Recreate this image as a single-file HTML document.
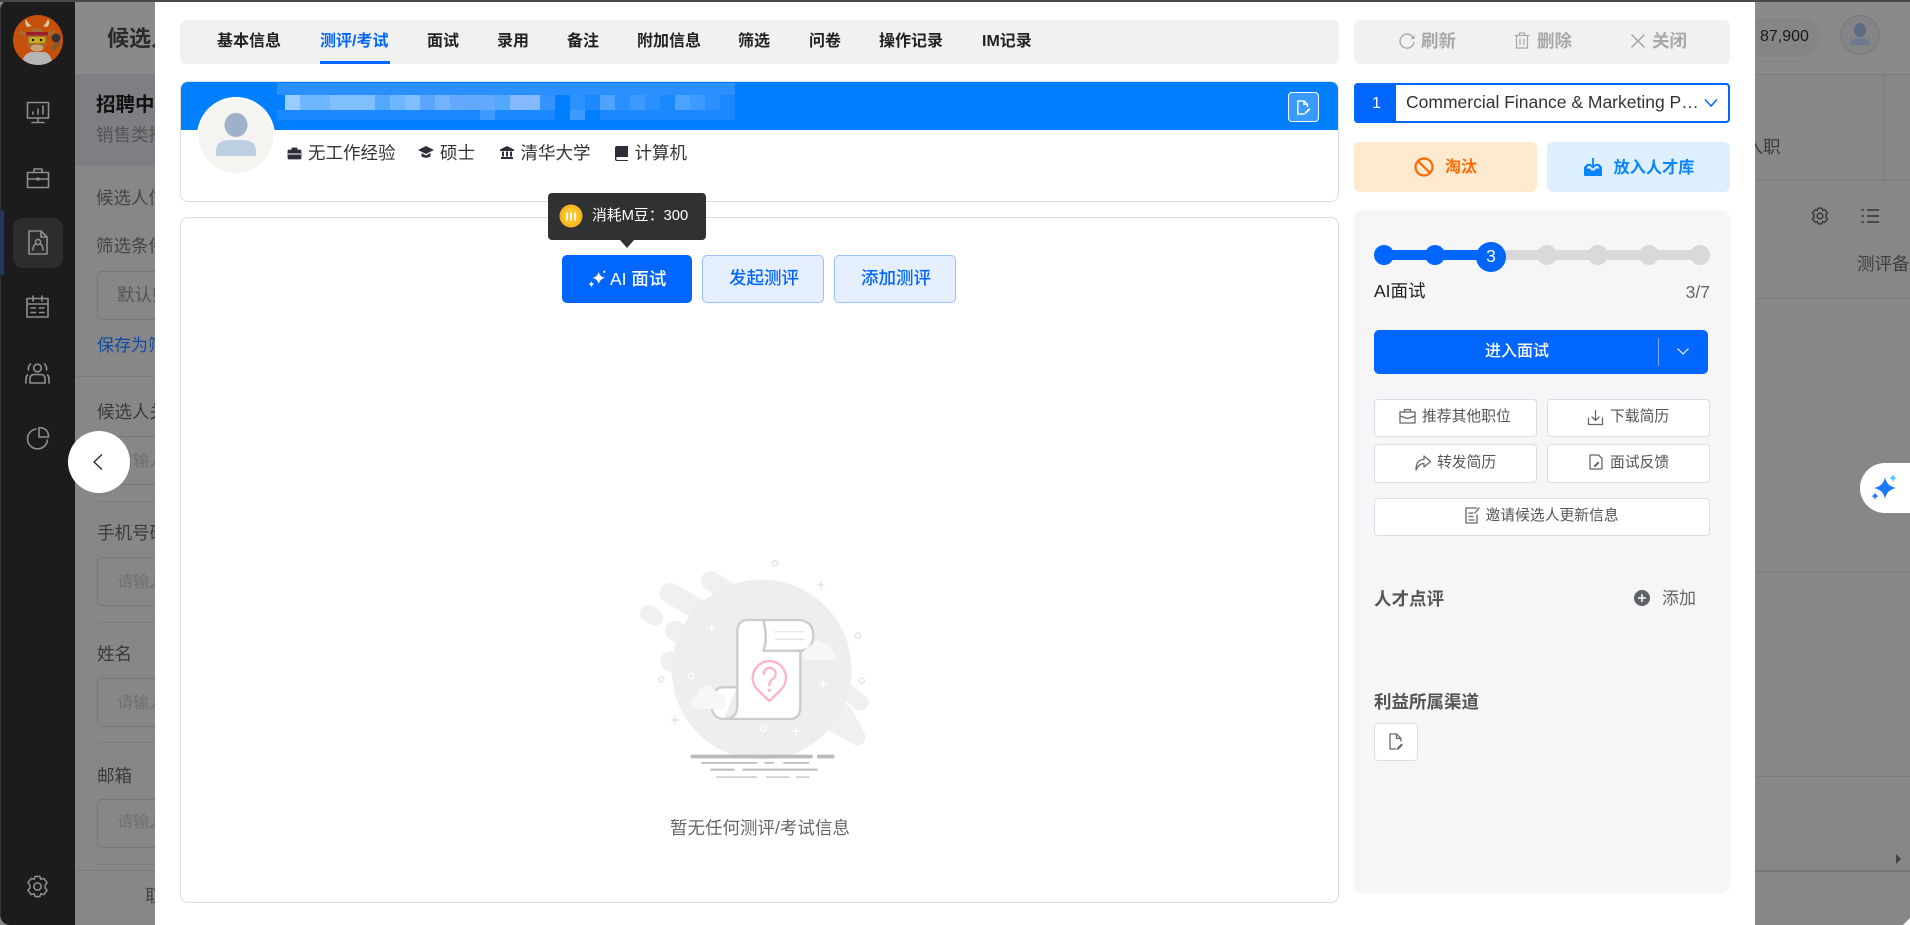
<!DOCTYPE html>
<html lang="zh">
<head>
<meta charset="utf-8">
<title>候选人</title>
<style>
html,body{margin:0;padding:0;width:1910px;height:925px;overflow:hidden;background:#878787}
body{position:relative;font-family:"Liberation Sans","Noto Sans CJK SC",sans-serif;color:#333}
.a{position:absolute}
.t{position:absolute;line-height:1;white-space:nowrap}
svg{position:absolute;display:block;overflow:visible}
.box{position:absolute;box-sizing:border-box}
.bg-in{position:absolute;left:97px;width:120px;height:49px;box-sizing:border-box;border:1px solid #777;border-radius:5px}
.hr{position:absolute;background:#7c7c7c;height:1px}
.tab{position:absolute;top:34px;font-size:16px;line-height:16px;font-weight:600;color:#222;white-space:nowrap}
.wb{position:absolute;box-sizing:border-box;background:#fff;border:1px solid #dddde6;border-radius:4px}
.wt{position:absolute;font-size:14.8px;line-height:1;color:#555;white-space:nowrap}
.ic{fill:none;stroke:#666;stroke-width:1.3;stroke-linecap:round;stroke-linejoin:round}
.sb{fill:none;stroke:#8f8f8f;stroke-width:1.6;stroke-linecap:round;stroke-linejoin:round}
</style>
</head>
<body>
<!-- background header areas -->
<div class="a" style="left:75px;top:0;width:80px;height:74px;background:#8a8a8a"></div>
<div class="a" style="left:75px;top:74px;width:80px;height:92px;background:#7e7e84"></div>
<div class="a" style="left:1755px;top:0;width:155px;height:74px;background:#8a8a8a"></div>
<div class="hr" style="left:1755px;top:74px;width:155px"></div>
<div class="hr" style="left:1755px;top:180px;width:155px"></div>
<div class="a" style="left:1884px;top:75px;width:1px;height:105px;background:#7c7c7c"></div>
<div class="hr" style="left:1755px;top:298px;width:155px"></div>
<div class="hr" style="left:1755px;top:572px;width:155px"></div>
<div class="hr" style="left:1755px;top:776px;width:155px"></div>
<div class="hr" style="left:1755px;top:870px;width:155px;height:2px;background:#777"></div>
<div class="a" style="left:1896px;top:854px;width:0;height:0;border-left:5px solid #444;border-top:5px solid transparent;border-bottom:5px solid transparent"></div>

<!-- left filter panel behind overlay -->
<div class="t" style="left:107px;top:28px;font-size:22px;font-weight:700;color:#2a2a2e">候选人</div>
<div class="t" style="left:96px;top:96px;font-size:19.5px;font-weight:700;color:#101010">招聘中</div>
<div class="t" style="left:96px;top:127px;font-size:17.5px;color:#555">销售类推</div>
<div class="t" style="left:96px;top:190px;font-size:17.5px;color:#444">候选人信</div>
<div class="t" style="left:96px;top:238px;font-size:17.5px;color:#444">筛选条件</div>
<div class="bg-in" style="top:271px"></div>
<div class="t" style="left:117px;top:287px;font-size:17.5px;color:#555">默认筛选</div>
<div class="t" style="left:97px;top:337px;font-size:17px;color:#0d4aa8">保存为筛选</div>
<div class="hr" style="left:75px;top:376px;width:80px"></div>
<div class="t" style="left:97px;top:404px;font-size:17.5px;color:#3a3a3a">候选人关键字</div>
<div class="bg-in" style="top:436px"></div>
<div class="t" style="left:117px;top:454px;font-size:16px;color:#6f6f6f">请输入</div>
<div class="hr" style="left:97px;top:501px;width:58px"></div>
<div class="t" style="left:97px;top:525px;font-size:17.5px;color:#3a3a3a">手机号码</div>
<div class="bg-in" style="top:557px"></div>
<div class="t" style="left:117px;top:575px;font-size:16px;color:#6f6f6f">请输入</div>
<div class="hr" style="left:97px;top:622px;width:58px"></div>
<div class="t" style="left:97px;top:646px;font-size:17.5px;color:#3a3a3a">姓名</div>
<div class="bg-in" style="top:678px"></div>
<div class="t" style="left:117px;top:696px;font-size:16px;color:#6f6f6f">请输入</div>
<div class="hr" style="left:97px;top:742px;width:58px"></div>
<div class="t" style="left:97px;top:768px;font-size:17.5px;color:#3a3a3a">邮箱</div>
<div class="bg-in" style="top:799px"></div>
<div class="t" style="left:117px;top:815px;font-size:16px;color:#6f6f6f">请输入</div>
<div class="hr" style="left:97px;top:864px;width:58px"></div>
<div class="hr" style="left:75px;top:870px;width:80px"></div>
<div class="t" style="left:145px;top:888px;font-size:17.5px;color:#444">取消</div>

<!-- sidebar -->
<div class="a" style="left:0;top:0;width:75px;height:925px;background:#1c1c1c;border-radius:10px 0 0 10px;box-sizing:border-box;border-left:1px solid #333"></div>
<div class="a" style="left:1px;top:210px;width:3px;height:65px;background:#0c3a8c"></div>
<div class="a" style="left:13px;top:218px;width:50px;height:50px;background:#2d2d2d;border-radius:10px"></div>
<svg style="left:13px;top:15px" width="50" height="50" viewBox="0 0 50 50">
  <defs><clipPath id="lg"><circle cx="25" cy="25" r="25"/></clipPath></defs>
  <circle cx="25" cy="25" r="25" fill="#c4500a"/>
  <g clip-path="url(#lg)">
  <path d="M8 50 Q10 39 18 37 H32 Q38 39 40 50Z" fill="#b5b5b5"/>
  <ellipse cx="24" cy="25" rx="10" ry="12" fill="#a86a2e"/>
  <path d="M14 12 Q11 8 13 4 Q15 9 19 11Z M34 12 Q38 8 35 4 Q33 9 30 11Z" fill="#d8c9a8"/>
  <path d="M7 15 L14 18 L13 21 L6 19Z M34 18 L41 15 L42 19 L35 21Z" fill="#a86a2e"/>
  <rect x="13" y="17" width="22" height="3.500" fill="#9c1d2c"/>
  <rect x="16" y="22" width="16" height="6" rx="2" fill="#c2ad1f"/>
  <ellipse cx="24" cy="33" rx="6.500" ry="3.500" fill="#c9a078"/>
  <circle cx="20" cy="25" r="1.200" fill="#111"/><circle cx="28" cy="25" r="1.200" fill="#111"/>
  <path d="M38 31L46 26L47 30L40 37Z" fill="#8a5a2a"/>
  <circle cx="43" cy="23" r="4.500" fill="#333"/>
  </g>
</svg>
<svg style="left:26px;top:101px" width="24" height="24" viewBox="0 0 24 24"><path class="sb" d="M1.500 1.500H22.500V17H1.500ZM12 17V21.500M6 21.500H18"/><path class="sb" d="M7 13V11M12 13V8M17 13V5"/></svg>
<svg style="left:26px;top:167px" width="24" height="22" viewBox="0 0 24 22"><path class="sb" d="M1.500 5.500H22.500V20.500H1.500ZM8 5.500V2H16V5.500M1.500 12H22.500"/><path d="M10.500 10.500h3v3h-3z" fill="#8f8f8f"/></svg>
<svg style="left:28px;top:230px" width="20" height="25" viewBox="0 0 20 25"><path class="sb" d="M1 1H13L19 7V24H1Z"/><path class="sb" d="M13 1V7H19M5 20Q5 15 8 14M15 20Q15 15 12 14"/><circle cx="10" cy="12" r="2.600" class="sb"/></svg>
<svg style="left:26px;top:295px" width="23" height="23" viewBox="0 0 23 23"><path class="sb" d="M1 3.500H22V22H1ZM1 9H22M7 1V6M16 1V6"/><path class="sb" d="M5 13H9.500M13.500 13H18M5 17.500H9.500M13.500 17.500H18"/></svg>
<svg style="left:25px;top:362px" width="25" height="22" viewBox="0 0 25 22"><circle cx="12.500" cy="6" r="3.800" class="sb"/><path class="sb" d="M5 21V17Q5 12.500 9.500 12.500H15.500Q20 12.500 20 17V21H5M5.500 2Q3 4 3.500 8M19.500 2Q22 4 21.500 8M1 21V17Q1 14.500 2.500 13M24 21V17Q24 14.500 22.500 13"/></svg>
<svg style="left:26px;top:426px" width="24" height="24" viewBox="0 0 24 24"><path class="sb" d="M10 3A10 10 0 1 0 21.500 14"/><path class="sb" d="M13 1.500Q22.500 2 22.500 11H13Z"/></svg>
<svg style="left:26px;top:875px" width="23" height="23" viewBox="0 0 24 24"><path class="sb" d="M9.500 1.500H14.500L15.500 4.500L18.500 3.500L22 8L20 10.500V13.500L22 16L18.500 20.500L15.500 19.500L14.500 22.500H9.500L8.500 19.500L5.500 20.500L2 16L4 13.500V10.500L2 8L5.500 3.500L8.500 4.500Z"/><circle cx="12" cy="12" r="3.800" class="sb"/></svg>

<!-- right background pieces -->
<div class="a" style="left:1755px;top:18px;width:65px;height:39px;background:#858588;border-radius:0 20px 20px 0"></div>
<div class="t" style="left:1760px;top:29px;font-size:16px;font-weight:500;color:#1a1a1a">87,900</div>
<div class="a" style="left:1840px;top:15px;width:40px;height:40px;border-radius:50%;background:#848487;box-sizing:border-box;border:1px solid #7a7a7a"></div>
<svg style="left:1840px;top:15px" width="40" height="40" viewBox="0 0 40 40"><ellipse cx="20" cy="15" rx="6" ry="7" fill="#5c6c82"/><path d="M10 30Q10 23 20 23Q30 23 30 30Z" fill="#6a7a90"/></svg>
<div class="t" style="left:1745.500px;top:139px;font-size:17.500px;color:#3a3a3a">入职</div>
<div class="t" style="left:1857px;top:256px;font-size:17.500px;color:#3f3f3f">测评备注</div>
<svg style="left:1811px;top:207px" width="18" height="18" viewBox="0 0 24 24"><path d="M9.500 1.500H14.500L15.500 4.500L18.500 3.500L22 8L20 10.500V13.500L22 16L18.500 20.500L15.500 19.500L14.500 22.500H9.500L8.500 19.500L5.500 20.500L2 16L4 13.500V10.500L2 8L5.500 3.500L8.500 4.500Z" fill="none" stroke="#333" stroke-width="1.800"/><circle cx="12" cy="12" r="3.800" fill="none" stroke="#333" stroke-width="1.800"/></svg>
<svg style="left:1861px;top:208px" width="18" height="16" viewBox="0 0 18 16"><path d="M6 2H18M6 8H18M6 14H18M0.500 2H3M0.500 8H3M0.500 14H3" stroke="#333" stroke-width="1.600"/></svg>

<!-- modal -->
<div class="a" style="left:0;top:0;width:1910px;height:2px;background:#4a4a4a"></div>
<div class="a" style="left:155px;top:2px;width:1600px;height:923px;background:#fff"></div>

<!-- back button -->
<div class="a" style="left:68px;top:431px;width:62px;height:62px;border-radius:50%;background:#fff"></div>
<svg style="left:92px;top:453px" width="12" height="18" viewBox="0 0 12 18"><path d="M10 1.500L2 9L10 16.500" fill="none" stroke="#222" stroke-width="1.300"/></svg>

<!-- tabs -->
<div class="a" style="left:180px;top:20px;width:1159px;height:44px;background:#f1f1f1;border-radius:6px"></div>
<div class="tab" style="left:217px">基本信息</div>
<div class="tab" style="left:320px;color:#0066ff">测评/考试</div>
<div class="a" style="left:320px;top:61px;width:70px;height:3px;background:#0066ff"></div>
<div class="tab" style="left:427px">面试</div>
<div class="tab" style="left:497px">录用</div>
<div class="tab" style="left:567px">备注</div>
<div class="tab" style="left:637px">附加信息</div>
<div class="tab" style="left:738px">筛选</div>
<div class="tab" style="left:809px">问卷</div>
<div class="tab" style="left:879px">操作记录</div>
<div class="tab" style="left:982px">IM记录</div>

<!-- profile card -->
<div class="box" style="left:180px;top:81px;width:1159px;height:121px;border:1px solid #ddd;border-radius:8px;overflow:hidden">
  <div class="a" style="left:0;top:0;width:1157px;height:48px;background:#0080ff"></div>
</div>
<svg style="left:0;top:0" width="1" height="1" viewBox="0 0 1 1" shape-rendering="crispEdges">
  <rect x="277" y="83" width="458" height="12" fill="#2a90ff"/>
  <rect x="277" y="110" width="458" height="10" fill="#1a88ff"/>
  <g fill="#0080ff"><rect x="555" y="110" width="15" height="10"/><rect x="585" y="110" width="15" height="10"/></g>
  <g fill="#3d9aff"><rect x="480" y="110" width="15" height="10"/><rect x="570" y="110" width="15" height="10"/></g>
  <rect x="285" y="95" width="15" height="15" fill="#99ccff"/><rect x="300" y="95" width="15" height="15" fill="#6eb6ff"/>
  <rect x="315" y="95" width="15" height="15" fill="#6eb6ff"/><rect x="330" y="95" width="15" height="15" fill="#80bfff"/>
  <rect x="345" y="95" width="15" height="15" fill="#80bfff"/><rect x="360" y="95" width="15" height="15" fill="#80bfff"/>
  <rect x="375" y="95" width="15" height="15" fill="#52a8ff"/><rect x="390" y="95" width="15" height="15" fill="#6eb6ff"/>
  <rect x="405" y="95" width="15" height="15" fill="#80bfff"/><rect x="420" y="95" width="15" height="15" fill="#5aa6ff"/>
  <rect x="435" y="95" width="15" height="15" fill="#73b2ff"/><rect x="450" y="95" width="15" height="15" fill="#63aaff"/>
  <rect x="465" y="95" width="15" height="15" fill="#63aaff"/><rect x="480" y="95" width="15" height="15" fill="#63aaff"/>
  <rect x="495" y="95" width="15" height="15" fill="#52a8ff"/><rect x="510" y="95" width="15" height="15" fill="#85b8ff"/>
  <rect x="525" y="95" width="15" height="15" fill="#85b8ff"/><rect x="540" y="95" width="15" height="15" fill="#3593ff"/>
  <rect x="555" y="95" width="15" height="15" fill="#0080ff"/><rect x="570" y="95" width="15" height="15" fill="#2c90ff"/>
  <rect x="585" y="95" width="15" height="15" fill="#1a88ff"/><rect x="600" y="95" width="15" height="15" fill="#50a4ff"/>
  <rect x="615" y="95" width="15" height="15" fill="#2a90ff"/><rect x="630" y="95" width="15" height="15" fill="#3d9aff"/>
  <rect x="645" y="95" width="15" height="15" fill="#2a90ff"/><rect x="660" y="95" width="15" height="15" fill="#1a88ff"/>
  <rect x="675" y="95" width="15" height="15" fill="#4ca4ff"/><rect x="690" y="95" width="15" height="15" fill="#3d9aff"/>
  <rect x="705" y="95" width="15" height="15" fill="#2a90ff"/><rect x="720" y="95" width="15" height="15" fill="#1a88ff"/>
</svg>
<!-- edit in header -->
<div class="box" style="left:1288px;top:92px;width:31px;height:30px;border:1px solid #fff;border-radius:4px;background:rgba(255,255,255,.22)"></div>
<svg style="left:1297px;top:100px" width="14" height="15" viewBox="0 0 16 17"><path d="M9 16H1V1H8L12 5V8M8 1V5H12" fill="none" stroke="#fff" stroke-width="1.600"/><path d="M9 14L14 9L15.500 10.500L10.500 15.500H9Z" fill="#fff"/></svg>
<!-- avatar -->
<div class="a" style="left:197px;top:97px;width:78px;height:78px;border-radius:50%;background:#fff"></div>
<div class="a" style="left:199px;top:99px;width:74px;height:74px;border-radius:50%;background:#f5f4f1"></div>
<svg style="left:197px;top:97px" width="78" height="78" viewBox="0 0 78 78"><ellipse cx="39" cy="28" rx="11.500" ry="12" fill="#9db1c8"/><path d="M19 59V54Q19 43 33 43H45Q59 43 59 54V59Z" fill="#bdd0e3"/></svg>
<!-- profile meta -->
<svg style="left:288px;top:147px" width="13" height="12" viewBox="0 0 13 12"><path d="M1 3H12Q13 3 13 4V11Q13 12 12 12H1Q0 12 0 11V4Q0 3 1 3ZM4 3V1H9V3" fill="#2e2e3a" stroke="#2e2e3a" stroke-width=".8"/><rect x="0" y="6.500" width="13" height="1" fill="#fff"/></svg>
<div class="t" style="left:308px;top:145px;font-size:17.500px;color:#333">无工作经验</div>
<svg style="left:418px;top:146px" width="16" height="13" viewBox="0 0 16 13"><path d="M8 0L16 4L8 8L0 4Z" fill="#2e2e3a"/><path d="M3.500 7V10.500Q8 13 12.500 10.500V7L8 9.500Z" fill="#2e2e3a"/></svg>
<div class="t" style="left:440px;top:145px;font-size:17.500px;color:#333">硕士</div>
<svg style="left:500px;top:146px" width="14" height="13" viewBox="0 0 14 13"><path d="M7 0L14 3.500V5H0V3.500Z M1 11H13V13H1Z M2 5.500H4V10.500H2Z M6 5.500H8V10.500H6Z M10 5.500H12V10.500H10Z" fill="#2e2e3a"/></svg>
<div class="t" style="left:520.500px;top:145px;font-size:17.500px;color:#333">清华大学</div>
<svg style="left:615px;top:146px" width="13" height="15" viewBox="0 0 13 15"><path d="M2 0H13V11H2.500Q1.200 11 1.200 12.500T2.500 14H13V15H2Q0 15 0 13V2Q0 0 2 0Z" fill="#2e2e3a"/></svg>
<div class="t" style="left:634.500px;top:145px;font-size:17.500px;color:#333">计算机</div>

<!-- main card -->
<div class="box" style="left:180px;top:217px;width:1159px;height:686px;border:1px solid #ddd;border-radius:8px"></div>

<!-- tooltip -->
<div class="a" style="left:548px;top:193px;width:158px;height:47px;background:#303133;border-radius:4px"></div>
<div class="a" style="left:620px;top:240px;width:0;height:0;border-left:7px solid transparent;border-right:7px solid transparent;border-top:8px solid #303133"></div>
<svg style="left:559px;top:204px" width="24" height="24" viewBox="0 0 24 24"><circle cx="12" cy="12" r="11.500" fill="#f7b51c"/><circle cx="12" cy="12" r="8.500" fill="#fcc42b"/><path d="M8 16.500V8.500M12 16.500V8.500M16 16.500V8.500" stroke="#fff" stroke-width="1.800" fill="none"/></svg>
<div class="t" style="left:592px;top:209px;font-size:14.800px;color:#fff">消耗M豆：300</div>

<!-- buttons -->
<div class="a" style="left:562px;top:255px;width:130px;height:48px;background:#0066ff;border-radius:5px"></div>
<svg style="left:588px;top:270px" width="18" height="18" viewBox="0 0 16 16"><path d="M9.500 1.500Q10.500 6 15 7Q10.500 8 9.500 12.500Q8.500 8 4 7Q8.500 6 9.500 1.500Z" fill="#fff"/><path d="M3 10Q3.500 12 5.500 12.500Q3.500 13 3 15.500Q2.500 13 0.500 12.500Q2.500 12 3 10Z" fill="#fff"/><circle cx="14.500" cy="1.500" r="1" fill="#fff"/></svg>
<div class="t" style="left:610px;top:271px;font-size:17.500px;font-weight:500;color:#fff">AI 面试</div>
<div class="box" style="left:702px;top:255px;width:122px;height:48px;background:#e5efff;border:1px solid #99c2ff;border-radius:5px"></div>
<div class="t" style="left:729px;top:270px;font-size:17.500px;font-weight:500;color:#0066ff">发起测评</div>
<div class="box" style="left:834px;top:255px;width:122px;height:48px;background:#e5efff;border:1px solid #99c2ff;border-radius:5px"></div>
<div class="t" style="left:861px;top:270px;font-size:17.500px;font-weight:500;color:#0066ff">添加测评</div>

<!-- empty illustration -->
<svg style="left:620px;top:530px" width="280" height="320" viewBox="0 0 840 960">
  <g stroke="#f0f0f0" stroke-linecap="round" fill="none">
    <path d="M272 152L385 220" stroke-width="58"/>
    <path d="M150 190L290 268" stroke-width="62"/>
    <path d="M85 250L105 262" stroke-width="50"/>
    <path d="M165 302L300 385" stroke-width="60"/>
    <path d="M150 393L230 440" stroke-width="58"/>
    <path d="M640 450L722 518" stroke-width="48"/>
    <path d="M672 545L712 620" stroke-width="48"/>
    <path d="M620 570L712 622" stroke-width="48"/>
  </g>
  <circle cx="425" cy="419" r="270" fill="#eee"/>
  <g fill="#fff" stroke="#ccc" stroke-width="7" stroke-linejoin="round">
    <path d="M350 472H305Q274 476 274 530Q280 567 312 567H510Q541 567 541 530V362H430Q445 330 430 270H385Q352 270 352 305V530Q350 567 312 567"/>
    <path d="M430 270H540Q580 275 580 318Q578 360 541 362H430Q445 330 430 270Z"/>
  </g>
  <path d="M465 305H553M465 328H553" stroke="#e5e5e5" stroke-width="4"/>
  <path d="M448 513L412 478A50 50 0 1 1 484 478Z" fill="#fff" stroke="#ffb3cb" stroke-width="7" stroke-linejoin="round"/>
  <path d="M431 432A18 18 0 1 1 458 447Q448 452 448 466" fill="none" stroke="#ffb3cb" stroke-width="7" stroke-linecap="round"/>
  <circle cx="448" cy="481" r="4.500" fill="#ffb3cb"/>
  <path d="M232 537Q212 535 214 515Q218 498 232 498Q238 467 262 467Q282 470 288 488Q315 490 320 515Q318 535 300 537Z" fill="#f7f7f7"/>
  <path d="M560 390Q545 388 546 372Q560 350 575 345Q590 320 612 340Q635 340 632 358Q650 370 644 390Z" fill="#f7f7f7"/>
  <g fill="none" stroke="#e2e2e2" stroke-width="4">
    <circle cx="465" cy="100" r="8"/><circle cx="714" cy="316" r="8"/><circle cx="725" cy="452" r="8"/><circle cx="124" cy="448" r="8"/>
    <path d="M602 153V177M590 165H614M165 558V582M153 570H177"/>
  </g>
  <g fill="none" stroke="#fff" stroke-width="4">
    <circle cx="214" cy="438" r="8"/><circle cx="430" cy="596" r="8"/>
    <path d="M275 281V305M263 293H287M610 449V473M598 461H622M527 592V616M515 604H539"/>
  </g>
  <g fill="#bbb">
    <rect x="212" y="674" width="366" height="11" rx="2"/><rect x="591" y="674" width="52" height="11" rx="2"/>
    <rect x="243" y="696" width="169" height="5"/><rect x="433" y="696" width="29" height="5"/><rect x="490" y="696" width="77" height="5"/>
    <rect x="271" y="716" width="73" height="6"/><rect x="368" y="716" width="225" height="6"/>
  </g>
  <g fill="#ccc"><rect x="289" y="739" width="121" height="5"/><rect x="438" y="739" width="69" height="5"/><rect x="528" y="739" width="40" height="5"/></g>
</svg>
<div class="t" style="left:670px;top:820px;font-size:17.500px;color:#666">暂无任何测评/考试信息</div>

<!-- right column action bar -->
<div class="a" style="left:1354px;top:20px;width:376px;height:44px;background:#f1f1f1;border-radius:6px"></div>
<svg style="left:1399px;top:33px" width="16" height="16" viewBox="0 0 16 16"><path d="M14 4.500A7 7 0 1 0 15 9" fill="none" stroke="#a8a8a8" stroke-width="1.300"/><path d="M15.500 2V6H11.500Z" fill="#a8a8a8"/></svg>
<div class="t" style="left:1421px;top:33px;font-size:17.500px;font-weight:700;color:#a8a8a8">刷新</div>
<svg style="left:1514px;top:32px" width="16" height="17" viewBox="0 0 16 17"><path d="M0.500 3.500H15.500M5.500 3.500V1H10.500V3.500M2.500 3.500V16H13.500V3.500M6 6.500V13M10 6.500V13" fill="none" stroke="#a8a8a8" stroke-width="1.200"/></svg>
<div class="t" style="left:1537px;top:33px;font-size:17.500px;font-weight:700;color:#a8a8a8">删除</div>
<svg style="left:1631px;top:34px" width="14" height="14" viewBox="0 0 14 14"><path d="M0.500 0.500L13.500 13.500M13.500 0.500L0.500 13.500" stroke="#a0a0a0" stroke-width="1.300"/></svg>
<div class="t" style="left:1652px;top:33px;font-size:17.500px;font-weight:700;color:#a8a8a8">关闭</div>

<!-- select -->
<div class="box" style="left:1354px;top:83px;width:376px;height:40px;border:2px solid #0066ff;border-radius:4px;background:#fff"></div>
<div class="a" style="left:1354px;top:83px;width:42px;height:40px;background:#0066ff;border-radius:4px 0 0 4px"></div>
<div class="t" style="left:1372px;top:96px;font-size:16px;color:#fff">1</div>
<div class="t" style="left:1406px;top:94px;width:297px;font-size:17.500px;color:#333;overflow:hidden;text-overflow:ellipsis">Commercial Finance &amp; Marketing Partner</div>
<svg style="left:1704px;top:98px" width="14" height="10" viewBox="0 0 14 10"><path d="M1 1.500L7 8L13 1.500" fill="none" stroke="#0066ff" stroke-width="1.500"/></svg>

<!-- two action buttons -->
<div class="a" style="left:1354px;top:142px;width:183px;height:50px;background:#ffe9cf;border-radius:6px"></div>
<svg style="left:1414px;top:157px" width="20" height="20" viewBox="0 0 20 20"><circle cx="10" cy="10" r="8.500" fill="none" stroke="#ff6a00" stroke-width="2.200"/><path d="M4 4L16 16" stroke="#ff6a00" stroke-width="2.200"/></svg>
<div class="t" style="left:1445px;top:160px;font-size:16px;font-weight:700;color:#ff6a00">淘汰</div>
<div class="a" style="left:1547px;top:142px;width:183px;height:50px;background:#def0ff;border-radius:6px"></div>
<svg style="left:1584px;top:158px" width="18" height="18" viewBox="0 0 18 18"><path d="M0 9L3 6H6V8H4L2.500 10.500H6L7.500 12.500H10.500L12 10.500H15.500L14 8H12V6H15L18 9V17Q18 18 17 18H1Q0 18 0 17Z" fill="#0a84ff"/><path d="M9 0V9M5.500 6L9 9.500L12.500 6" fill="none" stroke="#0a84ff" stroke-width="1.800"/></svg>
<div class="t" style="left:1613.500px;top:160px;font-size:16.200px;font-weight:700;color:#0a84ff">放入人才库</div>

<!-- side panel -->
<div class="a" style="left:1354px;top:210px;width:376px;height:683px;border-radius:8px;background:linear-gradient(#f6f6f9 0,#f6f6f9 300px,#f6f6f6 360px)"></div>
<div class="a" style="left:1384px;top:250px;width:316px;height:10px;background:#d9d9d9"></div>
<div class="a" style="left:1384px;top:250px;width:107px;height:10px;background:#0066ff"></div>
<div class="a" style="left:1374px;top:245px;width:20px;height:20px;border-radius:50%;background:#0066ff"></div>
<div class="a" style="left:1425px;top:245px;width:20px;height:20px;border-radius:50%;background:#0066ff"></div>
<div class="a" style="left:1476px;top:242px;width:30px;height:30px;border-radius:50%;background:#0066ff"></div>
<div class="t" style="left:1476px;width:30px;text-align:center;top:248px;font-size:17.500px;font-weight:500;color:#fff">3</div>
<div class="a" style="left:1537px;top:245px;width:20px;height:20px;border-radius:50%;background:#d9d9d9"></div>
<div class="a" style="left:1588px;top:245px;width:20px;height:20px;border-radius:50%;background:#d9d9d9"></div>
<div class="a" style="left:1639px;top:245px;width:20px;height:20px;border-radius:50%;background:#d9d9d9"></div>
<div class="a" style="left:1690px;top:245px;width:20px;height:20px;border-radius:50%;background:#d9d9d9"></div>
<div class="t" style="left:1374px;top:283px;font-size:17.500px;color:#222">AI面试</div>
<div class="t" style="left:1670px;top:284px;width:40px;text-align:right;font-size:17.500px;color:#666">3/7</div>

<div class="a" style="left:1374px;top:330px;width:334px;height:44px;background:#0066ff;border-radius:5px"></div>
<div class="t" style="left:1485px;top:344px;font-size:16px;font-weight:500;color:#fff">进入面试</div>
<div class="a" style="left:1658px;top:338px;width:1px;height:28px;background:rgba(255,255,255,.5)"></div>
<svg style="left:1677px;top:348px" width="12" height="7" viewBox="0 0 12 7"><path d="M0.500 0.500L6 6L11.500 0.500" fill="none" stroke="#fff" stroke-width="1.100"/></svg>

<div class="wb" style="left:1374px;top:399px;width:163px;height:38px"></div>
<svg style="left:1399px;top:408px" width="17" height="16" viewBox="0 0 17 16"><path class="ic" d="M1 4H16V15H1ZM5.500 4V1.500H11.500V4M1 8L8.500 10.500L16 8"/></svg>
<div class="wt" style="left:1422px;top:410px">推荐其他职位</div>
<div class="wb" style="left:1547px;top:399px;width:163px;height:38px"></div>
<svg style="left:1588px;top:410px" width="15" height="15" viewBox="0 0 15 15"><path class="ic" d="M7.500 0.500V10M4 7L7.500 10.500L11 7M0.500 8V14.500H14.500V8"/></svg>
<div class="wt" style="left:1610px;top:410px">下载简历</div>
<div class="wb" style="left:1374px;top:444px;width:163px;height:39px"></div>
<svg style="left:1415px;top:455px" width="16" height="16" viewBox="0 0 16 16"><path class="ic" d="M9 1L15.500 6.500L9 12V8.500Q4 8.500 1 15Q1 4.500 9 4.500Z"/></svg>
<div class="wt" style="left:1437px;top:456px">转发简历</div>
<div class="wb" style="left:1547px;top:444px;width:163px;height:39px"></div>
<svg style="left:1589px;top:454px" width="14" height="16" viewBox="0 0 14 16"><path class="ic" d="M1 1H9.500L13 4.500V15H1Z"/><path d="M5 11.500L9 7.500L10.500 9L6.500 13H5Z" fill="#666"/></svg>
<div class="wt" style="left:1610px;top:456px">面试反馈</div>
<div class="wb" style="left:1374px;top:498px;width:336px;height:38px"></div>
<svg style="left:1465px;top:507px" width="15" height="17" viewBox="0 0 15 17"><path class="ic" d="M11.500 1H1V16H12V8"/><path class="ic" d="M4 6H8M4 9.500H8M4 13H9M10 6L14 1"/></svg>
<div class="wt" style="left:1485.500px;top:509px">邀请候选人更新信息</div>

<div class="t" style="left:1374px;top:591px;font-size:17.500px;font-weight:700;color:#555">人才点评</div>
<svg style="left:1634px;top:590px" width="16" height="16" viewBox="0 0 16 16"><circle cx="8" cy="8" r="8" fill="#5f6368"/><path d="M8 4V12M4 8H12" stroke="#fff" stroke-width="1.500"/></svg>
<div class="t" style="left:1662px;top:590px;font-size:17px;color:#666">添加</div>
<div class="t" style="left:1374px;top:694px;font-size:17.500px;font-weight:700;color:#555">利益所属渠道</div>
<div class="wb" style="left:1374px;top:723px;width:44px;height:38px"></div>
<svg style="left:1389px;top:733px" width="15" height="17" viewBox="0 0 15 17"><path class="ic" d="M7 16H1V1H7.500L12 5.500V8M7.500 1V5.500H12"/><path d="M8 15L12.500 10.500L14 12L9.500 16.500H8Z" fill="#666"/></svg>

<!-- floating AI -->
<div class="a" style="left:1860px;top:463px;width:50px;height:50px;background:#fff;border-radius:25px 0 0 25px"></div>
<svg style="left:1868px;top:471px" width="32" height="34" viewBox="0 0 32 34"><path d="M17 6Q18.500 15 28 17Q18.500 19 17 28Q15.500 19 6 17Q15.500 15 17 6Z" fill="#1a7aff"/><path d="M25 3Q25.500 6 28.500 7Q25.500 8 25 11Q24.500 8 21.500 7Q24.500 6 25 3Z" fill="#4cc9ff"/><path d="M7 21Q7.500 24.500 11 25Q7.500 25.500 7 29Q6.500 25.500 3 25Q6.500 24.500 7 21Z" fill="#1a7aff"/></svg>

<!-- corner -->
<div class="a" style="left:1903px;top:918px;width:7px;height:7px;background:#fff;clip-path:polygon(100% 0,100% 100%,0 100%)"></div>
</body>
</html>
